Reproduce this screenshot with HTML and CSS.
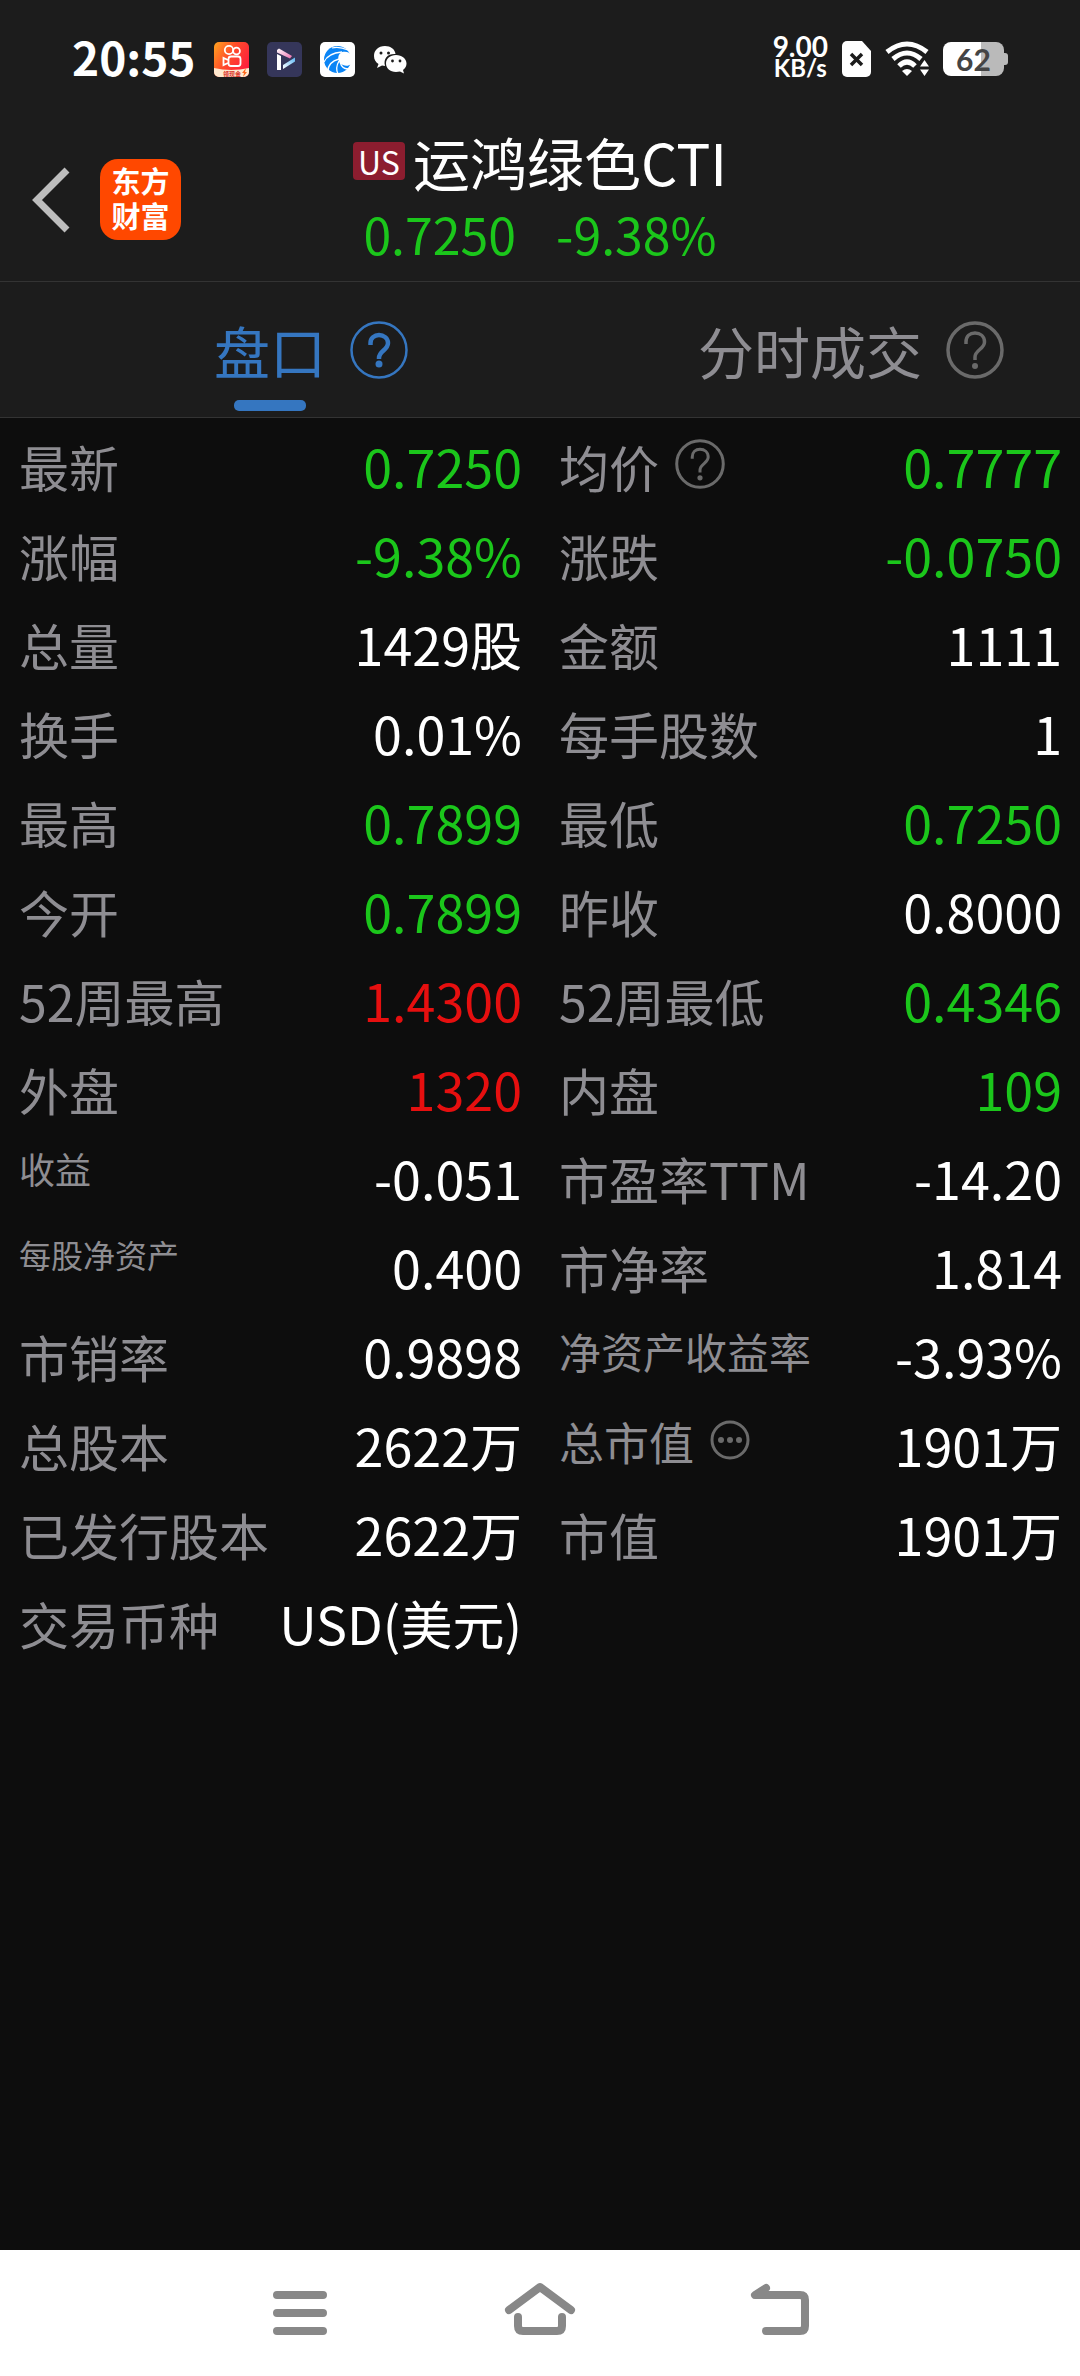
FILE: index.html
```html
<!DOCTYPE html>
<html lang="zh-CN">
<head>
    <meta charset="UTF-8">
    <meta name="viewport" content="width=device-width, initial-scale=1.0">
    <title>运鸿绿色CTI</title>
    <link rel="stylesheet" href="styles.css">
</head>
<body>
    <div class="status-bar">
        <div class="status-left">
            <span class="clock">20:55</span>
            <svg class="app-icon" viewBox="0 0 35 35">
                <defs>
                    <linearGradient id="warm" x1="0" y1="0" x2="1" y2="0.6">
                        <stop offset="0" stop-color="#ffa51f"/>
                        <stop offset="0.5" stop-color="#ff4b2b"/>
                        <stop offset="1" stop-color="#ff1f3d"/>
                    </linearGradient>
                </defs>
                <rect width="35" height="35" rx="5" fill="url(#warm)"/>
                <path d="M0 26q17 4 35 0v4a5 5 0 0 1-5 5H5a5 5 0 0 1-5-5z" fill="#ffe9cf"/>
                <g fill="none" stroke="#fff" stroke-width="1.8">
                    <circle cx="15" cy="8" r="4.2"/>
                    <circle cx="22.500" cy="9" r="3.400"/>
                    <rect x="14.500" y="14.500" width="12" height="9.500" rx="2.500"/>
                    <path d="M14 18l-4.500-2v7l4.500-2"/>
                </g>
                <text class="app-tag" x="9" y="33.500">领现金</text>
                <path d="M32 26l-4 5h2l-1 4 4-5h-2z" fill="#ff6a1f"/>
            </svg>
            <svg class="app-icon" viewBox="0 0 35 35">
                <defs>
                    <linearGradient id="pink" x1="0" y1="0" x2="1" y2="1">
                        <stop offset="0" stop-color="#fff"/>
                        <stop offset="1" stop-color="#f06fb0"/>
                    </linearGradient>
                    <linearGradient id="sky" x1="0" y1="1" x2="1" y2="0">
                        <stop offset="0" stop-color="#fff"/>
                        <stop offset="1" stop-color="#5cb8f5"/>
                    </linearGradient>
                </defs>
                <rect width="35" height="35" rx="5" fill="#35365a"/>
                <path d="M10 12l4 2v14h-4z" fill="#fff"/>
                <path d="M10 8l2-1.500 13 7.500-2 2.500-13-6z" fill="url(#pink)"/>
                <path d="M16 23l12-7.500v4L16 27z" fill="url(#sky)"/>
            </svg>
            <svg class="app-icon" viewBox="0 0 35 35">
                <rect width="35" height="35" rx="5" fill="#fff"/>
                <circle cx="17.500" cy="17.500" r="13.500" fill="#0a84f5"/>
                <path d="M22 10c4-1 7 0 10 3l-1 9c-3 3-8 2-11-1-3-4-2-9 2-11z" fill="#fff"/>
                <g fill="none" stroke="#fff" stroke-width="1.300">
                    <path d="M4 20q4-9 18-10"/>
                    <path d="M8 29q0-9 11-12"/>
                    <path d="M18 32q-3-6 1-13"/>
                    <path d="M12 6q7-2 16 2"/>
                    <path d="M20 20q2 7 8 7"/>
                </g>
            </svg>
            <svg class="app-icon" viewBox="0 0 35 35">
                <path d="M12 4C5 4 1 8.500 1 14c0 3.500 1.500 6 4.500 8L4 26l5-2.500 3 .5c-2-8 3-12.500 10.500-12C22 7 17.500 4 12 4z" fill="#fff"/>
                <path d="M23 13c-6 0-10 4-10 8.500S17 30 23 30l4-.5 4 2-1-3.500c2.500-1.700 3.500-4 3.500-6.500C33.500 17 29 13 23 13z" fill="#fff"/>
                <g fill="#1c1c1c">
                    <circle cx="8" cy="11" r="1.500"/>
                    <circle cx="15.500" cy="11" r="1.500"/>
                    <circle cx="19.500" cy="19" r="1.400"/>
                    <circle cx="27" cy="19" r="1.400"/>
                </g>
            </svg>
        </div>
        <div class="status-right">
            <div class="net-speed">
                <span class="net-value">9.00</span>
                <span class="net-unit">KB/s</span>
            </div>
            <svg class="sim-icon" viewBox="0 0 29 36">
                <path d="M5 0h15l9 10v21a5 5 0 0 1-5 5H5a5 5 0 0 1-5-5V5a5 5 0 0 1 5-5z" fill="#fff"/>
                <path d="M9 13l11 11M20 13L9 24" stroke="#1c1c1c" stroke-width="3.500"/>
            </svg>
            <svg class="wifi-icon" viewBox="0 0 44 36">
                <g fill="none" stroke="#fff" stroke-width="5">
                    <path d="M2 11q20-16 40 0"/>
                    <path d="M8 18q14-12 28 0"/>
                    <path d="M14 25q8-8 16 0"/>
                </g>
                <path d="M17 30q5-4 10 0l-5 5z" fill="#fff"/>
                <path d="M39 16l7 11H32z" fill="#1c1c1c"/>
                <path d="M39.500 19l4.500 6.500h-9zM39.500 35l4.500-6.500h-9z" fill="#fff"/>
            </svg>
            <div class="battery">
                <span class="battery-level">62</span>
            </div>
        </div>
    </div>

    <header class="header">
        <div class="header-left">
            <button class="back-button" type="button" aria-label="返回">
                <svg class="back-icon" viewBox="0 0 38 66">
                    <path d="M35 3L5 33l30 30" fill="none" stroke="#bdbdbd" stroke-width="7"/>
                </svg>
            </button>
            <div class="brand">东方<br>财富</div>
        </div>
        <div class="stock">
            <h1 class="stock-name"><span class="market">US</span>运鸿绿色CTI</h1>
            <div class="stock-price">
                <span>0.7250</span>
                <span>-9.38%</span>
            </div>
        </div>
    </header>

    <nav class="tabs">
        <a class="tab active" href="#quote">
            <span class="tab-name">盘口</span>
            <svg class="tab-help" viewBox="0 0 58 58">
                <circle cx="29" cy="29" r="27.500" fill="none" stroke="currentColor" stroke-width="2.500"/>
                <path d="M20.500 24v-2c0-5 4-8 8.500-8s9 3 9 8c0 7-9 8-9 15v1" fill="none" stroke="currentColor" stroke-width="4.500"/>
                <circle cx="29" cy="43" r="3.500" fill="currentColor"/>
            </svg>
        </a>
        <a class="tab" href="#trades">
            <span class="tab-name">分时成交</span>
            <svg class="tab-help dim" viewBox="0 0 58 58">
                <circle cx="29" cy="29" r="27" fill="none" stroke="currentColor" stroke-width="3.500"/>
                <path d="M20 23v-2c0-6 4-9 9-9s9.500 3 9.500 9c0 7-9.500 8-9.500 15v3" fill="none" stroke="currentColor" stroke-width="3.500"/>
                <circle cx="29" cy="45" r="3" fill="currentColor"/>
            </svg>
        </a>
    </nav>

    <main>
        <dl class="quote" id="quote">
            <div class="item"><dt>最新</dt><dd class="down">0.7250</dd></div>
            <div class="item">
                <dt>均价
                    <svg class="help-icon" viewBox="0 0 58 58">
                        <circle cx="29" cy="29" r="27" fill="none" stroke="currentColor" stroke-width="3.500"/>
                        <path d="M20 23v-2c0-6 4-9 9-9s9.500 3 9.500 9c0 7-9.500 8-9.500 15v3" fill="none" stroke="currentColor" stroke-width="3.500"/>
                        <circle cx="29" cy="45" r="3" fill="currentColor"/>
                    </svg>
                </dt>
                <dd class="down">0.7777</dd>
            </div>
            <div class="item"><dt>涨幅</dt><dd class="down">-9.38%</dd></div>
            <div class="item"><dt>涨跌</dt><dd class="down">-0.0750</dd></div>
            <div class="item"><dt>总量</dt><dd>1429股</dd></div>
            <div class="item"><dt>金额</dt><dd>1111</dd></div>
            <div class="item"><dt>换手</dt><dd>0.01%</dd></div>
            <div class="item"><dt>每手股数</dt><dd>1</dd></div>
            <div class="item"><dt>最高</dt><dd class="down">0.7899</dd></div>
            <div class="item"><dt>最低</dt><dd class="down">0.7250</dd></div>
            <div class="item"><dt>今开</dt><dd class="down">0.7899</dd></div>
            <div class="item"><dt>昨收</dt><dd>0.8000</dd></div>
            <div class="item"><dt>52周最高</dt><dd class="up">1.4300</dd></div>
            <div class="item"><dt>52周最低</dt><dd class="down">0.4346</dd></div>
            <div class="item"><dt>外盘</dt><dd class="up">1320</dd></div>
            <div class="item"><dt>内盘</dt><dd class="down">109</dd></div>
            <div class="item"><dt class="small">收益</dt><dd>-0.051</dd></div>
            <div class="item"><dt>市盈率TTM</dt><dd>-14.20</dd></div>
            <div class="item"><dt class="tiny">每股净资产</dt><dd>0.400</dd></div>
            <div class="item"><dt>市净率</dt><dd>1.814</dd></div>
            <div class="item"><dt>市销率</dt><dd>0.9898</dd></div>
            <div class="item"><dt class="medium">净资产收益率</dt><dd>-3.93%</dd></div>
            <div class="item"><dt>总股本</dt><dd>2622万</dd></div>
            <div class="item">
                <dt class="normal">总市值
                    <svg class="more-icon" viewBox="0 0 40 40">
                        <circle cx="20" cy="20" r="18" fill="none" stroke="currentColor" stroke-width="3"/>
                        <g fill="currentColor">
                            <circle cx="11" cy="20" r="3"/>
                            <circle cx="20" cy="20" r="3"/>
                            <circle cx="29" cy="20" r="3"/>
                        </g>
                    </svg>
                </dt>
                <dd>1901万</dd>
            </div>
            <div class="item"><dt>已发行股本</dt><dd>2622万</dd></div>
            <div class="item"><dt>市值</dt><dd>1901万</dd></div>
            <div class="item"><dt>交易币种</dt><dd>USD(美元)</dd></div>
        </dl>
    </main>

    <div class="nav-bar">
        <button class="nav-button" type="button" aria-label="最近任务">
            <svg class="nav-icon" viewBox="0 0 72 72">
                <path d="M13 18h46M13 36h46M13 54h46"/>
            </svg>
        </button>
        <button class="nav-button" type="button" aria-label="主屏幕">
            <svg class="nav-icon" viewBox="0 0 72 72">
                <path d="M5 33L36 10l31 23"/>
                <path d="M14 40v9q0 5 5 5h34q5 0 5-5v-9"/>
            </svg>
        </button>
        <button class="nav-button" type="button" aria-label="返回上一页">
            <svg class="nav-icon" viewBox="0 0 72 72">
                <path d="M22 11l-11 7h45q5 0 5 5v26q0 5-5 5H22"/>
            </svg>
        </button>
    </div>
</body>
</html>
```
FILE: styles.css
```css
* {
    box-sizing: border-box;
}
body {
    font-family: "Noto Sans CJK SC", sans-serif;
    background-color: #0d0d0d;
    color: #fff;
    margin: 0;
    min-height: 100vh;
    display: flex;
    flex-direction: column;
}
svg {
    display: block;
    flex-shrink: 0;
}
button {
    background: none;
    border: none;
    padding: 0;
    cursor: pointer;
}

/* status bar */
.status-bar {
    display: flex;
    justify-content: space-between;
    align-items: center;
    height: 118px;
    padding: 0 72px;
    background-color: #1c1c1c;
}
.status-left {
    display: flex;
    align-items: center;
    gap: 18px;
}
.clock {
    padding-bottom: 6px;
    font-size: 46px;
    line-height: 60px;
    font-weight: bold;
}
.app-icon {
    width: 35px;
    height: 35px;
}
.app-tag {
    font-size: 6px;
    font-weight: bold;
    fill: #d8322a;
}
.status-right {
    display: flex;
    align-items: center;
    gap: 14px;
}
.net-speed {
    display: flex;
    flex-direction: column;
    align-items: center;
    padding-bottom: 4px;
    font-family: Lato, "Noto Sans CJK SC", sans-serif;
    font-weight: bold;
}
.net-value {
    font-size: 28px;
    line-height: 22px;
}
.net-unit {
    font-size: 24px;
    line-height: 22px;
}
.sim-icon {
    width: 29px;
    height: 36px;
}
.wifi-icon {
    width: 44px;
    height: 36px;
}
.battery {
    position: relative;
    width: 61px;
    height: 34px;
    margin-right: 4px;
    border-radius: 8px;
    background: linear-gradient(to right, #fff 62%, #bababa 62%);
    text-align: center;
}
.battery::after {
    content: "";
    position: absolute;
    left: 100%;
    top: 11px;
    width: 4px;
    height: 12px;
    border-radius: 0 3px 3px 0;
    background-color: #bababa;
}
.battery-level {
    display: block;
    font-family: Lato, "Noto Sans CJK SC", sans-serif;
    font-size: 30px;
    line-height: 34px;
    font-weight: bold;
    color: #444;
}

/* header */
.header {
    display: grid;
    grid-template-columns: 1fr auto 1fr;
    align-items: center;
    height: 164px;
    background-color: #1c1c1c;
    border-bottom: 1px solid #333;
}
.header-left {
    display: flex;
    align-items: center;
    gap: 30px;
    padding-left: 32px;
}
.back-icon {
    width: 38px;
    height: 66px;
}
.brand {
    width: 81px;
    height: 81px;
    padding-top: 4px;
    border-radius: 18px;
    background-color: #ff4800;
    font-size: 29px;
    line-height: 35px;
    font-weight: bold;
    text-align: center;
}
.stock {
    padding-bottom: 6px;
}
.stock-name {
    display: flex;
    align-items: center;
    gap: 8px;
    margin: 0;
    font-size: 57px;
    line-height: 72px;
    font-weight: normal;
}
.market {
    width: 52px;
    border-radius: 4px;
    background-color: #8c1d2f;
    font-size: 32px;
    line-height: 38px;
    text-align: center;
}
.stock-price {
    display: flex;
    justify-content: center;
    gap: 40px;
    font-size: 50px;
    line-height: 72px;
    color: #1bc61b;
}

/* tabs */
.tabs {
    display: grid;
    grid-template-columns: 1fr 1fr;
    background-color: #1c1c1c;
    border-bottom: 1px solid #333;
}
.tab {
    position: relative;
    display: grid;
    grid-template-columns: 1fr auto 1fr;
    align-items: center;
    height: 135px;
    color: #8e8d92;
    text-decoration: none;
}
.tab-name {
    grid-column: 2;
    font-size: 56px;
    line-height: 72px;
}
.tab-help {
    width: 58px;
    height: 58px;
    margin-left: 24px;
}
.dim,
.help-icon,
.more-icon {
    color: #6a6a6a;
}
.active {
    color: #3576c0;
}
.active::after {
    content: "";
    position: absolute;
    left: 50%;
    bottom: 6px;
    width: 72px;
    height: 11px;
    margin-left: -36px;
    border-radius: 5px;
    background-color: #3576c0;
}

/* quote list */
main {
    flex: 1;
}
.quote {
    display: grid;
    grid-template-columns: 1fr 1fr;
    margin: 0;
    padding-top: 3px;
}
.item {
    display: flex;
    justify-content: space-between;
    align-items: flex-start;
    height: 89px;
    padding: 0 18px 0 19px;
}
dt {
    display: flex;
    gap: 16px;
    padding-top: 8px;
    font-size: 50px;
    line-height: 1.5;
    color: #8e8d92;
    white-space: nowrap;
}
dt.tiny {
    font-size: 32px;
}
dt.small {
    font-size: 36px;
}
dt.medium {
    font-size: 42px;
}
dt.normal {
    font-size: 45px;
}
dd {
    margin: 0;
    font-size: 52px;
    line-height: 89px;
    white-space: nowrap;
}
.up {
    color: #e60f0f;
}
.down {
    color: #1bc61b;
}
.help-icon {
    width: 50px;
    height: 50px;
    margin-top: 10px;
}
.more-icon {
    width: 40px;
    height: 40px;
    margin-top: 12px;
}

/* system navigation */
.nav-bar {
    display: flex;
    justify-content: center;
    height: 126px;
    background-color: #fff;
}
.nav-button {
    display: flex;
    justify-content: center;
    align-items: center;
    width: 240px;
}
.nav-icon {
    width: 72px;
    height: 72px;
    fill: none;
    stroke: #888;
    stroke-width: 8;
    stroke-linecap: round;
    stroke-linejoin: round;
}
```
